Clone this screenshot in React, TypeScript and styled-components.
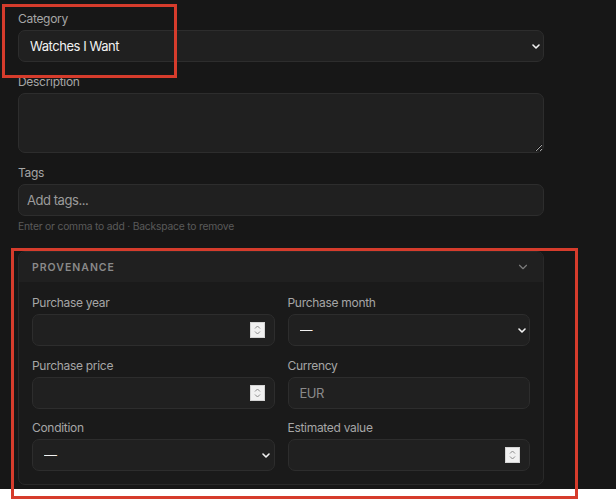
import React, { FC } from "react";
import styled, { createGlobalStyle } from "styled-components";
import { ChevronDown } from "lucide-react";

const GlobalStyle = createGlobalStyle`
  html, body {
    margin: 0;
    padding: 0;
    background: #ffffff;
    font-family: Inter, "Noto Sans", sans-serif;
  }
`;

const StyledFrameDiv = styled.div`
  position: relative;
  width: 616px;
  height: 499px;
  background: #ffffff;
  overflow: hidden;
`;

const StyledPageDiv = styled.div`
  box-sizing: border-box;
  height: 489px;
  background: #171717;
  padding: 11px 18px 0;
`;

const StyledFormDiv = styled.div`
  width: 526px;
  display: flex;
  flex-direction: column;
  gap: 12px;
`;

const StyledFieldDiv = styled.div`
  display: flex;
  flex-direction: column;
  gap: 3px;
  min-width: 0;
`;

const StyledLabel = styled.label`
  font-size: 12px;
  letter-spacing: -0.3px;
  line-height: 16px;
  color: #a6a6a6;
`;

const controlStyles = `
  box-sizing: border-box;
  width: 100%;
  height: 32px;
  margin: 0;
  border: 1px solid #2d2d2d;
  border-radius: 7px;
  background-color: #202020;
  font-family: Inter, "Noto Sans", sans-serif;
  font-size: 13px;
  letter-spacing: -0.45px;
  outline: none;
`;

const StyledControlWrapDiv = styled.div`
  position: relative;
`;

const StyledSelect = styled.select`
  ${controlStyles}
  appearance: none;
  -webkit-appearance: none;
  padding: 0 24px 0 11px;
  color: #f2f2f2;
`;

const StyledSelectArrowSvg = styled.svg<{ $right: number }>`
  position: absolute;
  right: ${({ $right }) => $right}px;
  top: 50%;
  margin-top: -2px;
  width: 8px;
  height: 5px;
  pointer-events: none;
`;

const StyledInput = styled.input`
  ${controlStyles}
  padding: 0 11px;
  color: #f2f2f2;
  -moz-appearance: textfield;

  &::placeholder {
    color: #8a8a8a;
  }

  &::-webkit-inner-spin-button,
  &::-webkit-outer-spin-button {
    -webkit-appearance: none;
    margin: 0;
  }
`;

const StyledSpinSpan = styled.span`
  position: absolute;
  right: 10px;
  top: 50%;
  margin-top: -8px;
  width: 15px;
  height: 16px;
  box-sizing: border-box;
  background: #f0f0f0;
  border: 1px solid #d4d4d4;
  display: flex;
  flex-direction: column;
  align-items: center;
  justify-content: center;
  gap: 2px;
  pointer-events: none;
`;

const StyledTextArea = styled.textarea`
  ${controlStyles}
  height: 60px;
  padding: 8px 11px;
  color: #f2f2f2;
  resize: vertical;
  display: block;
`;

const StyledTagsInput = styled(StyledInput)`
  padding: 0 8px;

  &::placeholder {
    color: #9b9b9b;
  }
`;

const StyledHintSpan = styled.span`
  margin-top: 0;
  font-size: 10.3px;
  letter-spacing: -0.2px;
  line-height: 14px;
  color: #5a5a5a;
`;

const StyledPanelSection = styled.section`
  margin-top: 6px;
  border: 1px solid #292929;
  border-radius: 7px;
  background: #1a1a1a;
  overflow: hidden;
`;

const StyledPanelHeaderDiv = styled.div`
  height: 30px;
  display: flex;
  align-items: center;
  justify-content: space-between;
  padding: 0 13px;
  background: #202020;
  color: #7c7c7c;
`;

const StyledPanelTitleSpan = styled.span`
  font-size: 10.5px;
  font-weight: 600;
  letter-spacing: 1px;
  color: #8a8a8a;
`;

const StyledPanelGridDiv = styled.div`
  display: grid;
  grid-template-columns: 1fr 1fr;
  column-gap: 13px;
  row-gap: 11.5px;
  padding: 13px 13px 13px;
`;

const StyledAnnotationDiv = styled.div`
  position: absolute;
  box-sizing: border-box;
  border: 3px solid #d63c2c;
  pointer-events: none;
`;

interface FieldProps {
  label: string;
  children: React.ReactNode;
}

const Field: FC<FieldProps> = ({ label, children }) => (
  <StyledFieldDiv>
    <StyledLabel>{label}</StyledLabel>
    {children}
  </StyledFieldDiv>
);

interface SelectFieldProps {
  value: string;
  arrowRight?: number;
}

const SelectControl: FC<SelectFieldProps> = ({ value, arrowRight = 5 }) => (
  <StyledControlWrapDiv>
    <StyledSelect defaultValue="v">
      <option value="v">{value}</option>
    </StyledSelect>
    <StyledSelectArrowSvg $right={arrowRight} viewBox="0 0 8 5">
      <path d="M1 1 L4 4 L7 1" fill="none" stroke="#f2f2f2" strokeWidth="1.6" strokeLinecap="round" strokeLinejoin="round" />
    </StyledSelectArrowSvg>
  </StyledControlWrapDiv>
);

const NumberControl: FC = () => (
  <StyledControlWrapDiv>
    <StyledInput type="number" />
    <StyledSpinSpan>
      <svg width="7" height="4" viewBox="0 0 7 4">
        <path d="M1 3.5 L3.5 1 L6 3.5" fill="none" stroke="#8a8a8a" strokeWidth="1" />
      </svg>
      <svg width="7" height="4" viewBox="0 0 7 4">
        <path d="M1 0.5 L3.5 3 L6 0.5" fill="none" stroke="#8a8a8a" strokeWidth="1" />
      </svg>
    </StyledSpinSpan>
  </StyledControlWrapDiv>
);

const App: FC = () => (
  <StyledFrameDiv>
    <GlobalStyle />
    <StyledPageDiv>
      <StyledFormDiv>
        <Field label="Category">
          <SelectControl value="Watches I Want" arrowRight={4} />
        </Field>
        <Field label="Description">
          <StyledTextArea />
        </Field>
        <Field label="Tags">
          <StyledTagsInput placeholder="Add tags..." />
          <StyledHintSpan>Enter or comma to add · Backspace to remove</StyledHintSpan>
        </Field>
        <StyledPanelSection>
          <StyledPanelHeaderDiv>
            <StyledPanelTitleSpan>PROVENANCE</StyledPanelTitleSpan>
            <ChevronDown size={14} strokeWidth={2} />
          </StyledPanelHeaderDiv>
          <StyledPanelGridDiv>
            <Field label="Purchase year">
              <NumberControl />
            </Field>
            <Field label="Purchase month">
              <SelectControl value="—" arrowRight={4} />
            </Field>
            <Field label="Purchase price">
              <NumberControl />
            </Field>
            <Field label="Currency">
              <StyledInput placeholder="EUR" />
            </Field>
            <Field label="Condition">
              <SelectControl value="—" arrowRight={5} />
            </Field>
            <Field label="Estimated value">
              <NumberControl />
            </Field>
          </StyledPanelGridDiv>
        </StyledPanelSection>
      </StyledFormDiv>
    </StyledPageDiv>
    <StyledAnnotationDiv style={{ left: 2, top: 4, width: 175, height: 74 }} />
    <StyledAnnotationDiv style={{ left: 11, top: 248, width: 567, height: 251 }} />
  </StyledFrameDiv>
);

export default App;
